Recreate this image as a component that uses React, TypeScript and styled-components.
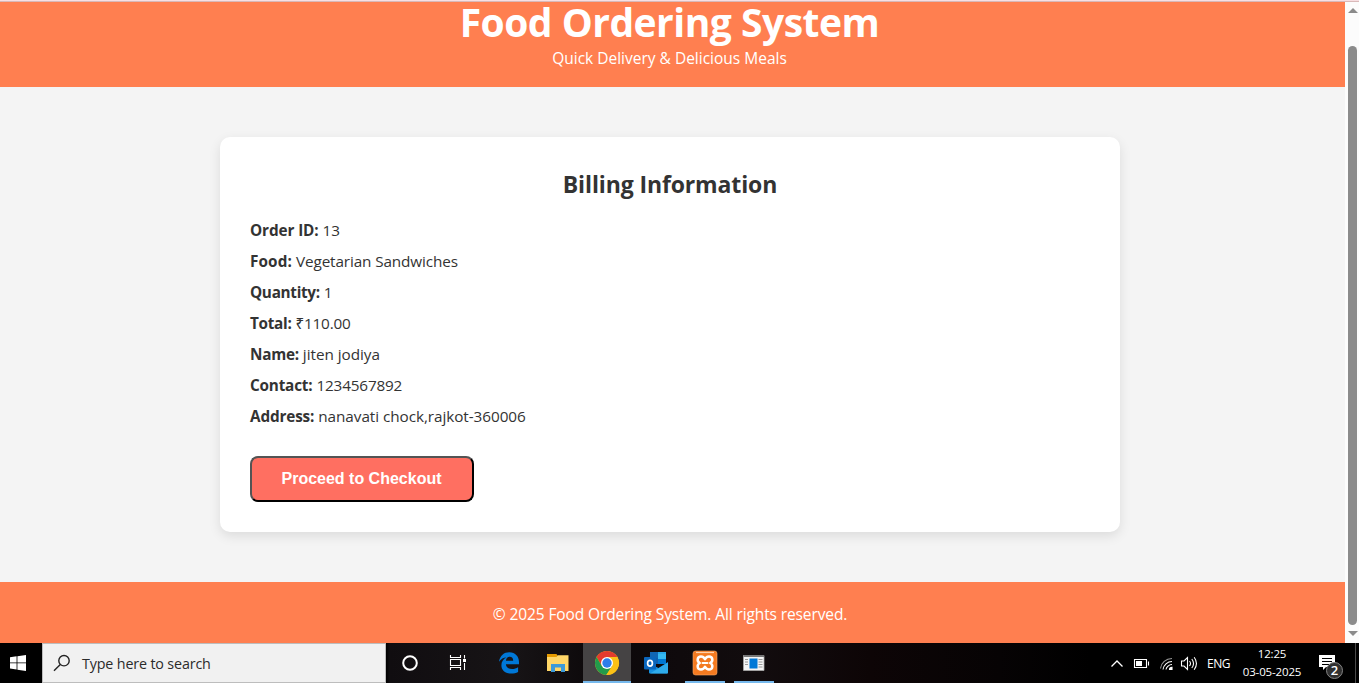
import React from "react";
import styled, { createGlobalStyle } from "styled-components";

const GlobalStyle = createGlobalStyle`
  * { box-sizing: border-box; }
  body { margin: 0; overflow: hidden; }
  p, h1, h2 { margin: 0; }
`;

const face = `"Segoe UI", "Open Sans", "Noto Sans", sans-serif`;

const Screen = styled.div`
  width: 1359px;
  height: 683px;
  display: flex;
  flex-direction: column;
  font-family: ${face};
  color: #333;
  overflow: hidden;
`;

const ChromeEdge = styled.div`
  height: 2px;
  background: #f8dfe2;
  border-bottom: 1px solid #d9b9b9;
`;

const Browser = styled.div`
  height: 641px;
  display: flex;
`;

const Page = styled.div`
  flex: 1;
  display: flex;
  flex-direction: column;
  background: #f4f4f4;
`;

const Header = styled.header`
  height: 85px;
  padding-right: 6px;
  background: #ff7f50;
  color: #fff;
  display: flex;
  flex-direction: column;
  align-items: center;
`;

const Line = styled.span<{ $track?: number }>`
  letter-spacing: ${(p) => p.$track ?? 0}px;
  white-space: pre;
`;

const Title = styled.h1`
  font-size: 39px;
  line-height: 40px;
  font-weight: 700;
  height: 43px;
`;

const Tagline = styled.p`
  font-size: 15.5px;
  line-height: 26px;
`;

const Main = styled.main`
  flex: 1;
  padding: 50px 5px 50px 0;
  display: flex;
  justify-content: center;
`;

const Card = styled.section`
  width: 900px;
  height: 395px;
  padding: 30px;
  background: #fff;
  border-radius: 10px;
  box-shadow: 0 4px 12px rgba(0, 0, 0, 0.1);
`;

const CardTitle = styled.h2`
  font-size: 23px;
  line-height: 34px;
  font-weight: 700;
  text-align: center;
  margin-bottom: 19px;
`;

const Row = styled.p`
  font-size: 15.3px;
  line-height: 21px;
  margin-bottom: 10px;
  display: flex;
  gap: 4px;
`;

const Label = styled.strong<{ $track?: number }>`
  letter-spacing: ${(p) => p.$track ?? 0}px;
`;

const Checkout = styled.button`
  display: block;
  width: 224px;
  height: 46px;
  margin-top: 29px;
  padding: 0 1px 0 0;
  border: 2px outset #000;
  border-radius: 8px;
  background: #ff6f61;
  color: #fff;
  font: 700 16px "Liberation Sans", Arial, sans-serif;
`;

const Footer = styled.footer`
  height: 61px;
  padding: 1px 5px 0 0;
  background: #ff7f50;
  color: #fff;
  font-size: 15.5px;
  line-height: 62px;
  text-align: center;
  overflow: hidden;
`;

const Scrollbar = styled.div`
  width: 14px;
  background: #fcfcfc;
  display: flex;
  flex-direction: column;
  align-items: center;
  padding: 6px 0 7px 1px;
`;

const Thumb = styled.div`
  width: 9px;
  height: 579px;
  margin: 33px 0 6px;
  border-radius: 5px;
  background: #8b8b8b;
`;

const Taskbar = styled.div`
  height: 40px;
  display: flex;
  background: linear-gradient(90deg, #000 0, #000 386px, #100d10 390px, #171416 510px, #0c080a 600px, #120c0e 760px, #0d0506 870px, #060304 1000px, #000 1090px);
`;

const Start = styled.div`
  width: 42px;
  display: flex;
  align-items: center;
  justify-content: center;
  padding-right: 6px;
`;

const Search = styled.div`
  width: 344px;
  display: flex;
  align-items: center;
  gap: 11px;
  padding-left: 10px;
  background: #f1f1f1;
  border: 1px solid #bdbdbd;
  color: #2b2b2b;
  font-size: 14.3px;
`;

const Apps = styled.div`
  display: flex;
  flex: 1;
`;

const AppButton = styled.div<{ $active?: boolean; $open?: boolean; $gap?: number }>`
  width: 48px;
  height: 40px;
  margin-left: ${(p) => p.$gap ?? 1}px;
  display: flex;
  flex-direction: column;
  align-items: center;
  background: ${(p) => (p.$active ? "#454344" : "transparent")};
  &::after {
    content: "";
    width: ${(p) => (p.$active ? 48 : 40)}px;
    height: 2px;
    background: ${(p) => (p.$active || p.$open ? "#76b9ed" : "transparent")};
  }
`;

const AppGlyph = styled.svg`
  flex: none;
  margin-top: 7px;
  margin-bottom: ${(p) => (p.height === "26" ? 5 : 7)}px;
`;

const Tray = styled.div`
  display: flex;
  align-items: center;
  color: #fff;
  svg { flex: none; }
`;

const Lang = styled.span`
  width: 24px;
  margin-left: 9px;
  font-size: 12px;
  letter-spacing: -0.5px;
`;

const Clock = styled.div`
  width: 66px;
  margin-left: 8px;
  text-align: center;
  font-size: 11.5px;
  letter-spacing: -0.15px;
  line-height: 18px;
  white-space: nowrap;
`;

const Peek = styled.div`
  width: 4px;
  height: 40px;
  margin-left: 12px;
  border-left: 1px solid #4a4a4a;
`;

const BellBox = styled.svg`
  margin-left: 13px;
`;

const Badge = styled.text`
  font: 600 13px ${face};
`;

const details: { label: string; value: string; lt: number; vt: number }[] = [
  { label: "Order ID:", value: "13", lt: -0.1, vt: -0.1 },
  { label: "Food:", value: "Vegetarian Sandwiches", lt: 0.12, vt: -0.12 },
  { label: "Quantity:", value: "1", lt: -0.3, vt: 0 },
  { label: "Total:", value: "₹110.00", lt: -0.3, vt: -0.2 },
  { label: "Name:", value: "jiten jodiya", lt: -0.25, vt: -0.05 },
  { label: "Contact:", value: "1234567892", lt: -0.2, vt: -0.17 },
  { label: "Address:", value: "nanavati chock,rajkot-360006", lt: -0.15, vt: -0.06 },
];

const WindowsIcon = () => (
  <svg width="16" height="16" viewBox="0 0 16 16" fill="#fff">
    <path d="M0 2.2 6.6 1.3v6.2H0zM7.4 1.2 16 0v7.5H7.4zM0 8.3h6.6v6.2L0 13.6zM7.4 8.3H16V16l-8.6-1.3z" />
  </svg>
);

const SearchIcon = () => (
  <svg width="18" height="18" viewBox="0 0 18 18" fill="none" stroke="#222" strokeWidth="1.4">
    <circle cx="11" cy="6.7" r="5.2" />
    <path d="M7.3 10.4 1 16.7" />
  </svg>
);

const CortanaIcon = () => (
  <AppGlyph width="26" height="24" viewBox="0 0 26 24">
    <circle cx="13" cy="13" r="6.8" fill="none" stroke="#fff" strokeWidth="2" />
  </AppGlyph>
);

const TaskViewIcon = () => (
  <AppGlyph width="26" height="24" viewBox="0 0 26 24" fill="none" stroke="#fff" strokeWidth="1.1">
    <path d="M5.5 5v2.5h10V5M5.5 20v-2.5h10V20M5.5 9.5h10v6h-10zM19.500 5v3.500M19.500 13v7" />
    <path d="M18 9h3v3h-3z" fill="#fff" stroke="none" />
  </AppGlyph>
);

const EdgeIcon = () => (
  <AppGlyph width="26" height="24" viewBox="0 0 26 24">
    <path
      fill="#0078d7"
      d="M3 11.8C4 5.4 8 2.2 13.3 2.2c6.2 0 9.700 4.500 9.700 9.800v2.300H9.900c.2 3.300 3 4.800 6.200 4.800 2.300 0 4.300-.7 6-1.800v4.700c-2 1.100-4.400 1.600-6.900 1.600-6 0-9.800-3.300-9.800-8.300 0-3.400 1.800-6.300 5-7.800C7.500 7.500 5 8.900 3 11.800zm6.900-1h7.300c0-2.600-1.300-4-3.500-4-2.100 0-3.500 1.500-3.800 4z"
    />
  </AppGlyph>
);

const FolderIcon = () => (
  <AppGlyph width="26" height="24" viewBox="0 0 26 24">
    <path fill="#e69b00" d="M2 4h9.500l1.500 2.500V9H2z" />
    <path fill="#ffd667" d="M2 7h9.500l1.200-1.700H23.500V21H2z" />
    <path fill="#3c9ad9" d="M6 14h14v8h-4v-4.500h-6V22H6z" />
  </AppGlyph>
);

const ChromeIcon = () => (
  <AppGlyph width="26" height="26" viewBox="0 0 26 26">
    <circle cx="13" cy="13" r="12" fill="#fbc116" />
    <path fill="#e33b2e" d="M2.600 7A12 12 0 0 1 23.400 7L13 7.200 7.800 16z" />
    <path fill="#229b4b" d="M2.600 7A12 12 0 0 0 12.300 25L18.200 16 7.800 16z" />
    <path fill="#fbc116" d="M12.300 25A12 12 0 0 0 23.400 7H13l5.200 9z" />
    <circle cx="13" cy="13" r="6" fill="#fff" />
    <circle cx="13" cy="13" r="4.700" fill="#2d7de9" />
  </AppGlyph>
);

const OutlookIcon = () => (
  <AppGlyph width="26" height="24" viewBox="0 0 26 24">
    <path fill="#1066b5" d="M7 2h8v6H7z" />
    <path fill="#28a8ea" d="M15 2h8v6h-8z" />
    <path fill="#0f5fae" d="M7 8h8v6H7z" />
    <path fill="#35b8f1" d="M15 4h8v5h-8z" />
    <path fill="#0078d4" d="M15 9h8v5h-8z" />
    <path fill="#1490df" d="M6 13.500 15.500 18 25 12v10.500a1 1 0 0 1-1 1H7a1 1 0 0 1-1-1z" />
    <path fill="#38b5ef" d="m7 23.500 18-11v10a1 1 0 0 1-1 1z" opacity=".75" />
    <rect x="1" y="7" width="12" height="12.500" rx="1" fill="#0a66bd" />
    <ellipse cx="7" cy="13.200" rx="2.400" ry="2.900" fill="none" stroke="#fff" strokeWidth="1.700" />
  </AppGlyph>
);

const XamppIcon = () => (
  <AppGlyph width="26" height="26" viewBox="0 0 26 26">
    <rect x="1" y="1" width="24" height="24" rx="2.500" fill="#f47a20" stroke="#f9a765" strokeWidth=".6" />
    <path d="M4 2.500h18" stroke="#ffd0a8" strokeWidth="1.200" />
    <path
      d="M13 9.200C12 7.200 11 6.400 9 6.400 5 6.400 4.600 11.300 7.800 13 4.600 14.700 5 19.600 9 19.600c2 0 3-.8 4-2.800 1 2 2 2.800 4 2.800 4 0 4.400-4.900 1.200-6.600C21.400 11.300 21 6.400 17 6.400c-2 0-3 .8-4 2.800z"
      fill="none"
      stroke="#fff"
      strokeWidth="2.500"
      strokeLinejoin="round"
    />
    <path d="M10.500 13h5" stroke="#fff" strokeWidth="2" strokeLinecap="round" />
  </AppGlyph>
);

const PanelIcon = () => (
  <AppGlyph width="26" height="24" viewBox="0 0 26 24">
    <path fill="#f5f5f5" stroke="#aaa" strokeWidth=".8" d="M2.500 5.500h20.500v15H2.500z" />
    <path fill="#777" d="M2.500 5h20.500v2H2.500z" />
    <path fill="#0078d7" d="M8.500 8.500h8v10h-8z" />
    <path stroke="#999" strokeWidth="1" d="M4 9.500h3M4 12h3M4 14.500h3M17.500 9.500h4M17.500 12h4M17.500 14.500h4M17.500 17h4" />
  </AppGlyph>
);

const TrayIcons = () => (
  <svg width="87" height="40" viewBox="1111 643 87 40" fill="none" stroke="#fff">
    <path d="m1111.500 666.500 5.500-5.500 5.500 5.500" strokeWidth="1.300" />
    <path d="M1134.500 659.500h12v8h-12zM1148.500 661.500v4" strokeWidth="1.100" />
    <path d="M1136 661h6v5h-6z" fill="#fff" stroke="none" />
    <g strokeWidth="1.100">
      <path d="M1160.500 668.500c.5-5.500 5.500-10 11.500-10" stroke="#999" />
      <path d="M1163 669.500c.5-4.500 4.500-8 9-8M1166 669.500c.3-2.500 3-5 6-5" />
      <path d="M1169.500 669.500c0-1.300 1-2.300 2.500-2.300v2.300z" fill="#fff" />
    </g>
    <path d="M1181.500 661h2.500l3.500-3.500v12l-3.500-3.500h-2.500z" strokeWidth="1.100" />
    <path d="M1189.500 661q2 2.500 0 5M1191.800 659q3.500 4.500 0 9M1194.200 657.200q4.500 6.300 0 12.600" strokeWidth="1.100" />
  </svg>
);

const NotificationIcon = () => (
  <BellBox width="25" height="40" viewBox="1318 643 25 40">
    <path fill="#fff" d="M1319 655h16v12h-9l-3 3v-3h-4z" />
    <path stroke="#000" d="M1322 658.500h10M1322 661.500h10M1322 664.500h7" />
    <circle cx="1334.500" cy="670.500" r="8" fill="#303030" stroke="#858585" />
    <Badge x="1330.700" y="674.600" fill="#fff">2</Badge>
  </BellBox>
);

export default function App() {
  return (
    <Screen>
      <GlobalStyle />
      <ChromeEdge />
      <Browser>
        <Page>
          <Header>
            <Title><Line $track={-0.5}>Food Ordering System</Line></Title>
            <Tagline><Line>Quick Delivery &amp; Delicious Meals</Line></Tagline>
          </Header>
          <Main>
            <Card>
              <CardTitle><Line $track={-0.12}>Billing Information</Line></CardTitle>
              {details.map((d) => (
                <Row key={d.label}>
                  <Label $track={d.lt}>{d.label}</Label>
                  <Line $track={d.vt}>{d.value}</Line>
                </Row>
              ))}
              <Checkout>Proceed to Checkout</Checkout>
            </Card>
          </Main>
          <Footer><Line $track={-0.11}>© 2025 Food Ordering System. All rights reserved.</Line></Footer>
        </Page>
        <Scrollbar>
          <svg width="10" height="5" viewBox="0 0 10 5"><path fill="#8b8b8b" d="M5 0l5 5H0z" /></svg>
          <Thumb />
          <svg width="10" height="5" viewBox="0 0 10 5"><path fill="#8b8b8b" d="M0 0h10L5 5z" /></svg>
        </Scrollbar>
      </Browser>
      <Taskbar>
        <Start><WindowsIcon /></Start>
        <Search><SearchIcon /><Line $track={-0.15}>Type here to search</Line></Search>
        <Apps>
          <AppButton $gap={0}><CortanaIcon /></AppButton>
          <AppButton $gap={0}><TaskViewIcon /></AppButton>
          <AppButton $gap={3}><EdgeIcon /></AppButton>
          <AppButton><FolderIcon /></AppButton>
          <AppButton $active><ChromeIcon /></AppButton>
          <AppButton><OutlookIcon /></AppButton>
          <AppButton $open><XamppIcon /></AppButton>
          <AppButton $open><PanelIcon /></AppButton>
        </Apps>
        <Tray>
          <TrayIcons />
          <Lang>ENG</Lang>
          <Clock><div>12:25</div><div>03-05-2025</div></Clock>
          <NotificationIcon />
          <Peek />
        </Tray>
      </Taskbar>
    </Screen>
  );
}
